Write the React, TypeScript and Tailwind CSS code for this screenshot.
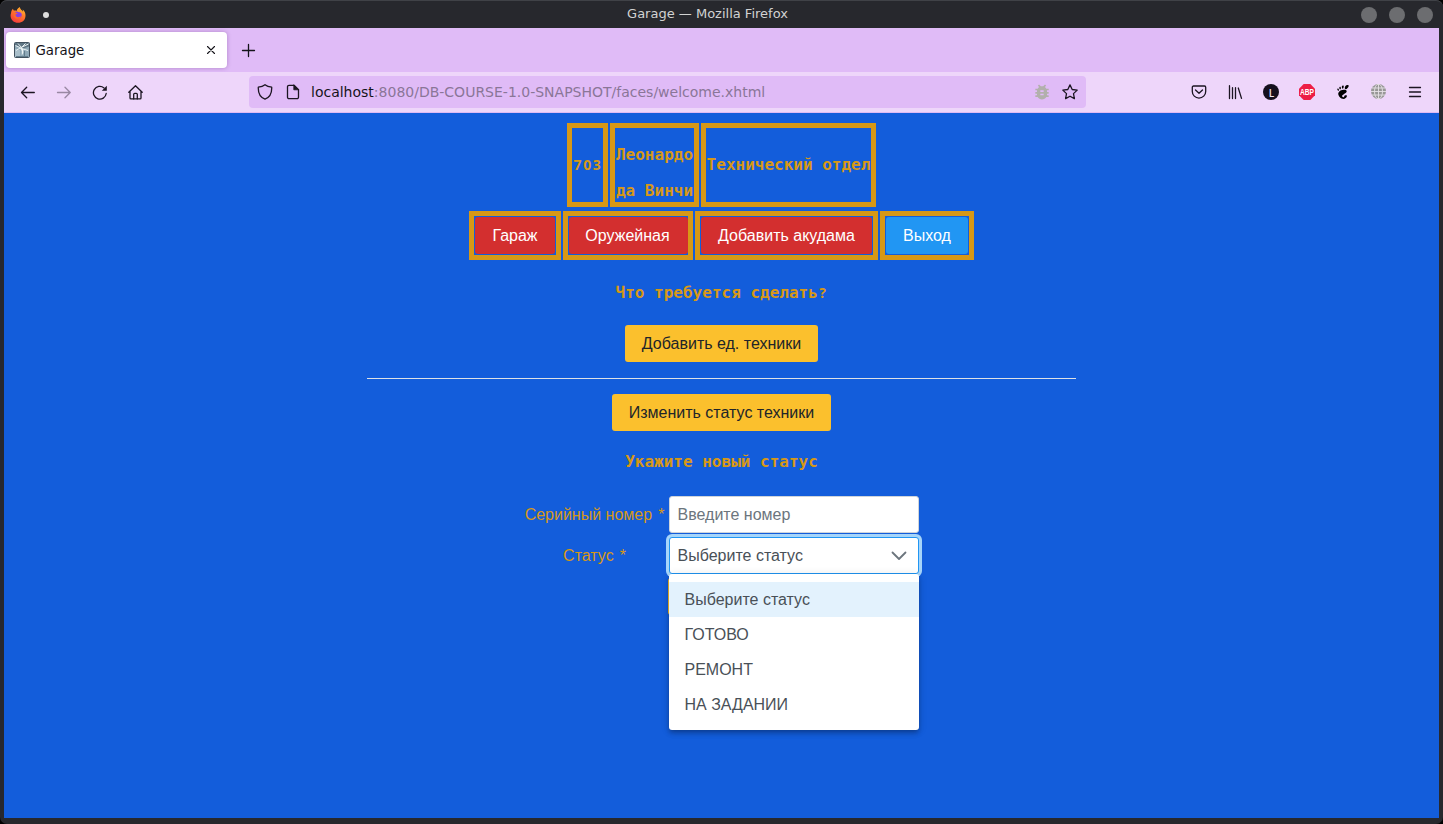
import React from "react";
import { MdBugReport } from "react-icons/md";
import { SiGnome } from "react-icons/si";

const stroke = {
  fill: "none",
  stroke: "currentColor",
  strokeWidth: 1.3,
  strokeLinecap: "round" as const,
  strokeLinejoin: "round" as const,
};

function Icon({ children, className = "" }: { children: React.ReactNode; className?: string }) {
  return (
    <svg viewBox="0 0 16 16" className={`block size-4 shrink-0 ${className}`} {...stroke}>
      {children}
    </svg>
  );
}

function FirefoxLogo() {
  return (
    <svg viewBox="0 0 16 16" className="block size-4">
      <defs>
        <linearGradient id="flame" x1="0.8" y1="0" x2="0.2" y2="1">
          <stop offset="0" stopColor="#ffbd2e" />
          <stop offset="0.4" stopColor="#ff7a2a" />
          <stop offset="1" stopColor="#f5363f" />
        </linearGradient>
      </defs>
      <path
        d="M1 6.200C1.200 4.200 2 2.600 3 1.800c.1.700.4 1.300.8 1.800C5 3.300 6 3.500 6.800 3.700 7.300 2.100 8.200.800 9.900.200c.1 1.500 1 2.200 2 3.200.4.400.7.900.9 1.400.1-.8 0-1.600-.2-2.200 2.100 1.500 3 4 2.900 6.100C15.400 13 12.200 15.800 8 15.800 3.900 15.800.600 12.600.600 8.700c0-.9.1-1.700.4-2.500z"
        fill="url(#flame)"
      />
      <circle cx="8.200" cy="7.700" r="3.500" fill="#8a3fe0" />
      <path d="M3.800 6.200C5 5.400 6.800 5.500 7.600 6.300 7 7.100 6.200 7.300 5.500 7.600 5.400 9.300 7 10.500 8.500 10.200c1-.2 1.600-.8 2.600-.5-1.300 2.600-5.800 2.700-7.100-.2-.4-.900-.6-2.200-.2-3.300z" fill="#ff6a2a" />
      <path d="M7 3.900C7.300 2.300 8.200 1 9.900.4c0 1.600 1.100 2.400 2 3.300 1 1.200 1.200 2.500.8 3.700C11.800 5.600 9.800 4.600 8 5z" fill="#ff9a2c" />
    </svg>
  );
}

function GarageFavicon() {
  return (
    <svg viewBox="0 0 16 16" className="block size-4 shrink-0">
      <rect x="0.500" y="0.500" width="15" height="15" rx="1" fill="#8fa9b7" stroke="#41515e" />
      <path d="M1 1h14v3.500L9 6.500 1 3z" fill="#5f7684" />
      <path d="M1 7l5 1v7H1z" fill="#a9bfca" />
      <path d="M1.500 3.500l5 2.300L14.500 2M2 8.500L6 6l8 2.500M4 1.500l3.500 4 4-4" fill="none" stroke="#e9f1f3" strokeWidth="1" />
      <path d="M6.500 6l2.800 1v4l-1.500 2.500V9z" fill="#edf4f5" />
      <path d="M2 14.500h12M10.500 9v5" stroke="#627d8c" fill="none" />
    </svg>
  );
}

function TitleBar() {
  return (
    <div className="grid h-7 shrink-0 grid-cols-[467px_481px_1fr] items-center rounded-t-[7px] border-t border-[#404247] bg-[#27282d] font-['DejaVu_Sans',sans-serif]">
      <div className="flex items-center gap-[17px] pl-[10px]">
        <FirefoxLogo />
        <span className="ml-[-0.500px] size-[6px] rounded-full bg-[#dedede]" />
      </div>
      <div className="pb-[2px] text-center text-[13px] leading-4 whitespace-nowrap text-[#d2d2d2]">Garage — Mozilla Firefox</div>
      <div className="flex justify-end gap-3 pr-[10px]">
        <span className="size-4 rounded-full bg-[#6c6d70]" />
        <span className="size-4 rounded-full bg-[#6c6d70]" />
        <span className="size-4 rounded-full bg-[#6c6d70]" />
      </div>
    </div>
  );
}

function TabStrip() {
  return (
    <div className="flex h-11 shrink-0 items-center bg-[#e0bbf7] pl-[2px] text-[#15141a]">
      <div className="flex h-9 w-[221px] items-center rounded bg-white pr-2 pl-2 shadow-[0_0_4px_rgba(80,30,110,0.35)]">
        <GarageFavicon />
        <span className="ml-[5.500px] flex-1 pt-[2px] text-[13.330px] leading-4">Garage</span>
        <Icon>
          <path d="M4.500 4.500l7 7M11.500 4.500l-7 7" strokeWidth="1.100" />
        </Icon>
      </div>
      <Icon className="ml-[14px]">
        <path d="M7.500 2.500v12M1.500 8.500h12" />
      </Icon>
    </div>
  );
}

function Toolbar() {
  return (
    <div className="flex h-[41px] shrink-0 items-center border-b border-[#dfbaf4] bg-[#eed6fa] text-[#1c1522]">
      <div className="flex w-[245px] items-center gap-5 pl-4">
        <Icon>
          <path d="M14.300 8.500H1.500M6.700 3.300L1.500 8.500 6.700 13.700" />
        </Icon>
        <Icon className="opacity-40">
          <path d="M1.500 8.500h12.700M9 3.300L14.200 8.500 9 13.700" />
        </Icon>
        <Icon>
          <path d="M14.200 9.500A6.400 6.400 0 1 1 12 3.900" />
          <path d="M14.800 1.800v5H9.800z" fill="currentColor" stroke="none" />
        </Icon>
        <Icon>
          <path d="M.8 8.300L7.500 1.700l6.700 6.600M2 7.300v6.600c0 .6.4 1 1 1h9c.6 0 1-.4 1-1V7.300" />
          <path d="M5.700 14.900v-4.600c0-.6.4-1 1-1h1.600c.6 0 1 .4 1 1v4.600" />
        </Icon>
      </div>
      <div className="flex h-8 w-[837px] items-center rounded bg-[#e0bbf7] px-2">
        <Icon>
          <path d="M8 .7C6.300 2.100 4 2.900 1.300 3.200 1 9.400 3.300 13.400 8 15.200c4.700-1.800 7-5.800 6.700-12C12 2.900 9.700 2.100 8 .7z" />
        </Icon>
        <Icon className="ml-3">
          <path d="M9 1.300H4a1.500 1.500 0 0 0-1.500 1.500v10.400A1.500 1.500 0 0 0 4 14.700h8a1.500 1.500 0 0 0 1.500-1.500V5.600z" />
          <path d="M8.800 1.100v4.700h4.700z" fill="currentColor" strokeWidth="0.800" />
        </Icon>
        <span className="ml-[10px] flex-1 text-[14px] leading-5 whitespace-nowrap text-[#8a7697]">
          <span className="text-[#15141a]">localhost</span>:8080/DB-COURSE-1.0-SNAPSHOT/faces/welcome.xhtml
        </span>
        <MdBugReport className="mr-[10px] size-5 text-[#b2b0ac]" />
        <Icon>
          <path d="M8 .9l2.200 4.600 5 .6-3.700 3.500.9 5L8 12.200l-4.400 2.400.9-5L.8 6.100l5-.6z" />
        </Icon>
      </div>
      <div className="ml-auto flex items-center gap-5 pr-4">
        <Icon>
          <path d="M2.500 2h11c.7 0 1.200.5 1.200 1.200V7.400a6.700 6.700 0 0 1-13.400 0V3.200c0-.7.5-1.200 1.200-1.200zM4.500 6l3.500 3.300L11.500 6" />
        </Icon>
        <Icon>
          <path d="M2.500 1.700v12.800M5.500 3.700v10.800M8.500 3.700v10.800M11.300 4l3.200 10.400" />
        </Icon>
        <span className="flex size-4 items-center justify-center rounded-full bg-[#15101d] pt-px pl-px font-['Open_Sans',sans-serif] text-[10px] leading-none font-semibold text-[#eee6f2]">L</span>
        <svg viewBox="0 0 16 16" className="block size-4 overflow-visible">
          <path d="M4.700 0h6.600L16 4.700v6.600L11.300 16H4.700L0 11.300V4.700z" fill="#ed1e45" />
          <text x="8" y="11" textAnchor="middle" textLength="14" lengthAdjust="spacingAndGlyphs" fontFamily="Liberation Sans" fontWeight="700" fontSize="8.500" fill="#fff">ABP</text>
        </svg>
        <span className="flex size-4 items-center justify-center text-black">
          <SiGnome className="size-[14px]" />
        </span>
        <svg viewBox="0 0 16 16" className="block size-4" fill="none" stroke="#e6e2e6" strokeWidth="0.900">
          <circle cx="7.500" cy="7.500" r="7.500" fill="#979796" stroke="none" />
          <path d="M7.500 0v15M0 7.500h15M1 4h13M1 11h13" />
          <ellipse cx="7.500" cy="7.500" rx="4" ry="7.500" />
        </svg>
        <Icon>
          <path d="M2.500 3.500h11M2.500 8h11M2.500 12.500h11" />
        </Icon>
      </div>
    </div>
  );
}

function Cell({ children, className = "" }: { children: React.ReactNode; className?: string }) {
  return <div className={`flex items-center justify-center border-[5px] border-[#d79816] ${className}`}>{children}</div>;
}

function Button({ children, className }: { children: React.ReactNode; className: string }) {
  return <button className={`h-[37px] shrink-0 rounded-[3px] text-base leading-[19px] whitespace-nowrap ${className}`}>{children}</button>;
}

const mono = "font-['DejaVu_Sans_Mono',monospace] text-base font-bold text-[#d79816]";
const options = ["Выберите статус", "ГОТОВО", "РЕМОНТ", "НА ЗАДАНИИ"];

function StatusSelect() {
  return (
    <div className="relative">
      <div className="absolute top-[41px] left-[-1px] h-[37px] w-24 rounded-[3px] bg-[#fbc02d]" />
      <div className="relative flex h-[37px] items-center justify-between rounded-[3px] border border-[#2196f3] bg-white pr-[11px] pl-[7.500px] text-[#495057] shadow-[0_0_0_3px_#a6d5fa]">
        Выберите статус
        <svg viewBox="0 0 16 16" className="size-4" fill="none" stroke="#6c757d" strokeWidth="1.800" strokeLinecap="round" strokeLinejoin="round">
          <path d="M1.500 4.500L8 11 14.500 4.500" />
        </svg>
      </div>
      <ul className="absolute top-[37px] left-0 h-[156px] w-[250px] rounded-[3px] bg-white py-2 text-[#495057] shadow-[0_2px_4px_-1px_rgba(0,0,0,0.2),0_4px_5px_0_rgba(0,0,0,0.14),0_1px_10px_0_rgba(0,0,0,0.12)]">
        {options.map((option, i) => (
          <li key={option} className={`h-[35px] px-[15.500px] leading-[35px] ${i === 0 ? "bg-[#e3f2fd]" : ""}`}>
            {option}
          </li>
        ))}
      </ul>
    </div>
  );
}

function Page() {
  return (
    <main className="flex flex-1 flex-col items-center bg-[#135ddb] pt-[10px] font-['Liberation_Sans',sans-serif] text-base">
      <div className={`flex h-[84px] gap-[2px] ${mono}`}>
        <Cell className="w-[41px]">
          <span className="pb-[2px] pl-px font-['Open_Sans',sans-serif] text-[14px] tracking-[1.600px]">703</span>
        </Cell>
        <Cell className="w-[89px]">
          <span className="pt-[15px] text-center leading-9">
            Леонардо
            <br />
            да Винчи
          </span>
        </Cell>
        <Cell className="w-[175px] whitespace-nowrap">Технический отдел</Cell>
      </div>
      <div className="mt-1 flex h-[49px] gap-[2px] text-white">
        <Cell className="w-[92px]">
          <Button className="w-[80px] bg-[#d32f2f]">Гараж</Button>
        </Cell>
        <Cell className="w-[130px]">
          <Button className="w-[119px] bg-[#d32f2f] pr-px">Оружейная</Button>
        </Cell>
        <Cell className="w-[183px]">
          <Button className="w-[171px] bg-[#d32f2f]">Добавить акудама</Button>
        </Cell>
        <Cell className="w-[94px]">
          <Button className="w-[82px] bg-[#2196f3]">Выход</Button>
        </Cell>
      </div>
      <h2 className={`mt-[23px] h-5 leading-5 ${mono}`}>
        Что требуется сделать<span className="inline-block w-[9.600px] text-center font-['Open_Sans',sans-serif] text-[14px] leading-none">?</span>
      </h2>
      <Button className="mt-[22px] w-[193px] bg-[#fbc02d] text-[#212529]">Добавить ед. техники</Button>
      <hr className="mt-4 w-[709px] border-t border-[#dee2e6]" />
      <Button className="mt-[15px] w-[219px] bg-[#fbc02d] text-[#212529]">Изменить статус техники</Button>
      <h2 className={`mt-[21px] h-5 leading-5 ${mono}`}>Укажите новый статус</h2>
      <div className="mt-[24px] grid grid-cols-[141px_250px] gap-x-1 gap-y-1">
        <label className="text-center leading-[37px] whitespace-nowrap text-[#d79816]">
          Серийный номер<span className="ml-[6px]">*</span>
        </label>
        <input
          placeholder="Введите номер"
          className="h-[37px] w-full rounded-[3px] border border-[#ced4da] bg-white px-[7.500px] placeholder:text-[#6c757d]"
        />
        <label className="text-center leading-[37px] text-[#d79816]">
          Статус<span className="ml-[6px]">*</span>
        </label>
        <StatusSelect />
      </div>
    </main>
  );
}

export default function App() {
  return (
    <div className="h-[824px] w-[1443px] overflow-hidden bg-black">
      <div className="flex h-full flex-col rounded-[7px] bg-[#27282d] pb-[6px] font-['DejaVu_Sans',sans-serif]">
        <TitleBar />
        <div className="mx-1 flex flex-1 flex-col">
          <TabStrip />
          <Toolbar />
          <Page />
        </div>
      </div>
    </div>
  );
}
